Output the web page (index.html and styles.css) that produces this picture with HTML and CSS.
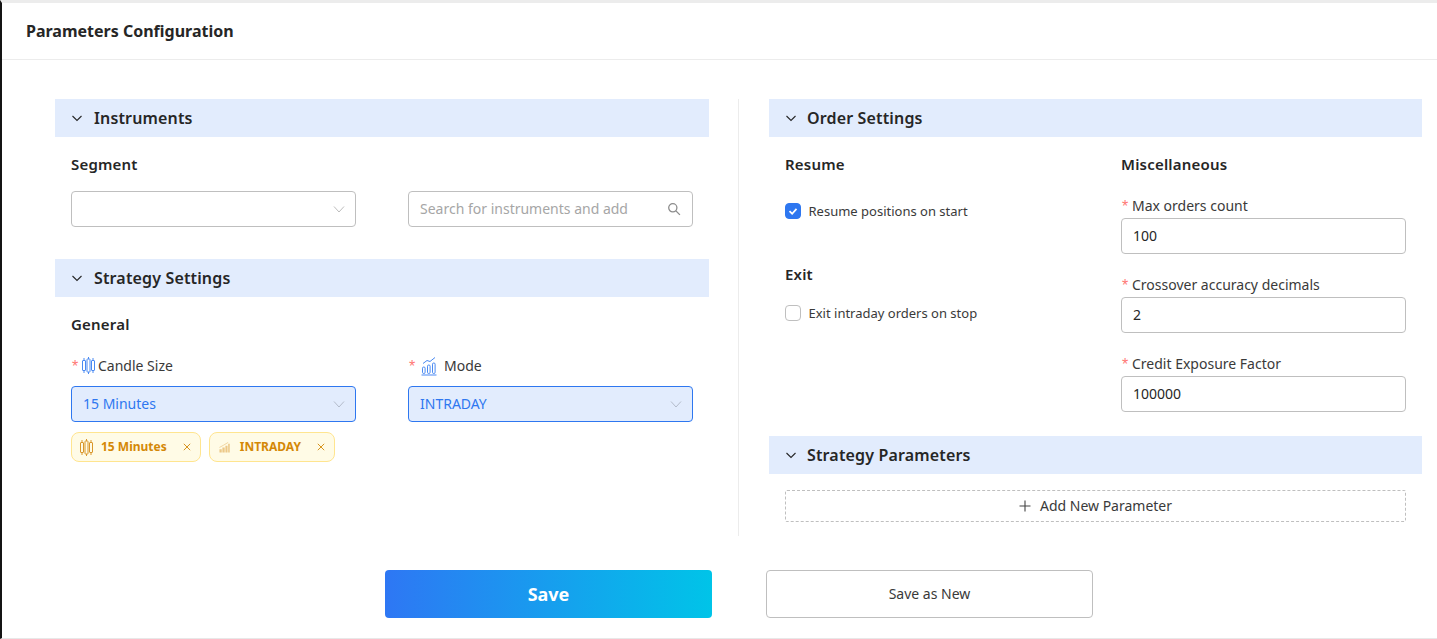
FILE: index.html
```html
<!DOCTYPE html>
<html lang="en">
<head>
<meta charset="utf-8">
<title>Parameters Configuration</title>
<link rel="stylesheet" href="styles.css">
</head>
<body>
<div class="page">
  <header class="page-header">Parameters Configuration</header>
  <main class="content">
    <div class="columns">
      <section class="col col-left">
        <div class="panel-head"><svg class="caret" viewBox="0 0 12 12"><path d="M1.5 4 6 8.5 10.5 4"/></svg><span>Instruments</span></div>
        <div class="panel-body">
          <h4 class="sub segment-title">Segment</h4>
          <div class="two">
            <div class="select"><span></span><svg class="arrow" viewBox="0 0 12 12"><path d="M1 3.5 6 9l5-5.5"/></svg></div>
            <div class="select search"><span class="placeholder">Search for instruments and add</span>
              <svg class="search-icon" viewBox="0 0 14 14"><circle cx="5.8" cy="5.8" r="4.1"/><path d="m8.9 8.9 4 4"/></svg></div>
          </div>
        </div>
        <div class="panel-head strategy-head"><svg class="caret" viewBox="0 0 12 12"><path d="M1.5 4 6 8.5 10.5 4"/></svg><span>Strategy Settings</span></div>
        <div class="panel-body">
          <h4 class="sub general-title">General</h4>
          <div class="two">
            <div class="field">
              <label class="lbl"><i class="req">*</i>
                <svg class="ico-candle" viewBox="0 0 13 17"><g class="blue-stroke"><path d="M2 1v2.500M2 13.500V16M6.500 0v2M6.500 15v2M11 1v2.500M11 13.500V16"/><rect x=".5" y="3.500" width="3" height="10" rx=".5"/><rect x="5" y="2" width="3" height="13" rx=".5"/><rect x="9.500" y="3.500" width="3" height="10" rx=".5"/></g></svg>
                Candle Size</label>
              <div class="select active"><span>15 Minutes</span><svg class="arrow" viewBox="0 0 12 12"><path d="M1 3.5 6 9l5-5.5"/></svg></div>
            </div>
            <div class="field">
              <label class="lbl mode-lbl"><i class="req">*</i>
                <svg class="ico-mode" viewBox="0 0 16 20"><g class="blue-stroke"><rect x="1.5" y="11" width="2.6" height="6.5" rx="1.2"/><rect x="6.5" y="9" width="2.6" height="8.5" rx="1.2"/><rect x="11.5" y="7" width="2.6" height="10.5" rx="1.2"/><path d="M2 7.5 6 4.5 9 5.5 14 1.5"/><path class="base" d="M.5 19h15"/></g></svg>
                Mode</label>
              <div class="select active"><span>INTRADAY</span><svg class="arrow" viewBox="0 0 12 12"><path d="M1 3.5 6 9l5-5.5"/></svg></div>
            </div>
          </div>
          <div class="tags">
            <span class="tag tag-candle">
              <svg class="tag-ico" viewBox="0 0 13 17"><g class="amber-stroke"><path d="M2 1v2.500M2 13.500V16M6.500 0v2M6.500 15v2M11 1v2.500M11 13.500V16"/><rect x=".5" y="3.500" width="3" height="10" rx=".5"/><rect x="5" y="2" width="3" height="13" rx=".5"/><rect x="9.500" y="3.500" width="3" height="10" rx=".5"/></g></svg>
              <b>15 Minutes</b><svg class="x" viewBox="0 0 8 8"><path d="m.8.8 6.4 6.4M7.2.8.8 7.2"/></svg></span>
            <span class="tag tag-mode">
              <svg class="tag-ico2" viewBox="0 0 12 12"><path class="soft" d="M.5 12V8.5h2.5V12zM3.7 12V6.5h2.5V12zM7 12V4.5h2.3V12zM10 12V2.5h1.7V12z"/><path class="soft-line" d="M.5 6.5 5 4l5-3"/></svg>
              <b>INTRADAY</b><svg class="x" viewBox="0 0 8 8"><path d="m.8.8 6.4 6.4M7.2.8.8 7.2"/></svg></span>
          </div>
        </div>
      </section>
      <section class="col col-right">
        <div class="panel-head"><svg class="caret" viewBox="0 0 12 12"><path d="M1.5 4 6 8.5 10.5 4"/></svg><span>Order Settings</span></div>
        <div class="panel-body order-body">
          <div class="two order">
            <div>
              <h4 class="sub segment-title">Resume</h4>
              <label class="check-row resume-row"><span class="check on"><svg viewBox="0 0 16 16"><path d="m4 8.2 3 2.9 5-5.6"/></svg></span>Resume positions on start</label>
              <h4 class="sub exit-title">Exit</h4>
              <label class="check-row exit-row"><span class="check"></span>Exit intraday orders on stop</label>
            </div>
            <div>
              <h4 class="sub misc-title">Miscellaneous</h4>
              <div class="input-field"><label class="lbl small"><i class="req">*</i>Max orders count</label><div class="input">100</div></div>
              <div class="input-field"><label class="lbl small"><i class="req">*</i>Crossover accuracy decimals</label><div class="input">2</div></div>
              <div class="input-field"><label class="lbl small"><i class="req">*</i>Credit Exposure Factor</label><div class="input">100000</div></div>
            </div>
          </div>
        </div>
        <div class="panel-head params-head"><svg class="caret" viewBox="0 0 12 12"><path d="M1.5 4 6 8.5 10.5 4"/></svg><span>Strategy Parameters</span></div>
        <div class="panel-body params-body">
          <button class="add-btn"><svg viewBox="0 0 12 12"><path d="M6 .5v11M.5 6h11"/></svg>Add New Parameter</button>
        </div>
      </section>
    </div>
    <div class="actions">
      <button class="btn-save">Save</button>
      <button class="btn-new">Save as New</button>
    </div>
  </main>
</div>
</body>
</html>
```
FILE: styles.css
```css
* { box-sizing: border-box; }
html, body { margin: 0; height: 100%; }
body { font-family: "Noto Sans", "Open Sans", sans-serif; color: #262626; background: #fff; overflow: hidden; }
.page { height: 639px; border-top: 3px solid #ececec; border-left: 2px solid #141414; border-bottom: 1px solid #e8e8e8; display: flex; flex-direction: column; }
.page-header { height: 57px; flex: none; padding-left: 24px; display: flex; align-items: center; font-size: 16px; font-weight: 700; color: #262626; border-bottom: 1px solid #ececec; padding-bottom: 1px; }
.content { padding: 39px 15px 0 53px; }
.columns { display: grid; grid-template-columns: 654px 653px; column-gap: 60px; position: relative; height: 437px; }
.columns::before { content: ""; position: absolute; left: 683px; top: 0; bottom: 0; width: 1px; background: #ececec; }
.panel-head { height: 38px; background: #e2ecfd; display: flex; align-items: center; padding-left: 16px; font-size: 16px; font-weight: 600; letter-spacing: .15px; color: #262626; }
.caret { width: 12px; height: 12px; margin-right: 10px; fill: none; stroke: #262626; stroke-width: 1.1; }
.col-left .caret { margin-right: 11px; }
.panel-body { padding: 0 16px; }
.sub { margin: 0; font-size: 15px; line-height: 20px; font-weight: 600; color: #262626; letter-spacing: .2px; }
.segment-title { padding-top: 17px; }
.general-title { padding-top: 17px; }
.two { display: grid; grid-template-columns: 285px 285px; column-gap: 52px; }
.select { height: 36px; border: 1px solid #bfbfbf; border-radius: 4px; display: flex; align-items: center; justify-content: space-between; padding: 0 10px 2px 11px; font-size: 14px; background: #fff; }
.panel-body > .sub + .two { margin-top: 17px; }
.arrow { width: 12px; height: 12px; fill: none; stroke: #bdbdbd; stroke-width: 1; flex: none; margin-top: 2px; }
.placeholder { color: #a6a6a6; font-size: 14px; }
.search-icon { width: 14px; height: 14px; fill: none; stroke: #8c8c8c; stroke-width: 1.3; margin-right: 1px; margin-top: 2px; }
.strategy-head { margin-top: 32px; }
.field { display: flex; flex-direction: column; }
.lbl { height: 20px; display: flex; align-items: center; font-size: 14px; color: #3a3a3a; margin-bottom: 10px; position: relative; top: -1px; }
.req { font-style: normal; color: #ff7875; font-size: 16px; width: 9px; margin-left: 1px; flex: none; font-family: "Liberation Sans", sans-serif; padding-top: 3px; }
.general-title + .two { margin-top: 22px !important; }
.ico-candle { width: 13px; height: 17px; margin: 0 3px 0 1px; }
.ico-mode { width: 16px; height: 20px; margin: 2px 7px 0 3px; }
.blue-stroke { fill: none; stroke: #4a8af2; stroke-width: 1; }
.blue-stroke .base { stroke: #7fabf6; stroke-width: 1.4; }
.amber-stroke { fill: none; stroke: #d9962a; stroke-width: 1; }
.select.active { border-color: #2e77f0; background: #e2ecfd; color: #2e77f0; }
.select.active .arrow { stroke: #b4bccb; }
.tags { display: flex; gap: 8px; margin-top: 10px; }
.tag { height: 30px; border: 1px solid #ffe58f; background: #fffbe6; border-radius: 8px; display: flex; align-items: center; color: #d48806; font-size: 12px; padding: 0 9px 0 8px; }
.tag b { font-weight: 700; margin-bottom: 2px; }
.tag-ico { width: 13px; height: 17px; margin-right: 8px; }
.tag-ico2 { width: 11px; height: 12px; margin-right: 10px; margin-left: 1px; }
.soft { fill: #ecc888; }
.soft-line { fill: none; stroke: #ecc888; stroke-width: .8; }
.x { width: 8px; height: 8px; margin-left: 16px; fill: none; stroke: #d48806; stroke-width: .9; }
.order-body .two.order { grid-template-columns: 284px 285px; }
.check-row { display: flex; align-items: center; font-size: 13px; color: #3a3a3a; height: 20px; }
.check { width: 16px; height: 16px; border: 1px solid #bfbfbf; border-radius: 4px; margin-right: 7.5px; display: flex; flex: none; background: #fff; }
.check.on { background: #2e77f0; border-color: #2e77f0; }
.check svg { width: 14px; height: 14px; fill: none; stroke: #fff; stroke-width: 2; }
.resume-row { margin-top: 27px; }
.exit-title { margin-top: 43px; }
.exit-row { margin-top: 19px; }
.misc-title { padding-top: 17px; }
.input-field { margin-bottom: 21px; }
.misc-title + .input-field { margin-top: 22px; }
.lbl.small { margin-bottom: 2px; }
.input-field .lbl.small .req { width: 10px; }
.input { height: 36px; border: 1px solid #bfbfbf; border-radius: 4px; padding: 0 11px 2px; display: flex; align-items: center; font-size: 14px; color: #262626; }
.order-body { height: 299px; }
.params-body { padding-top: 16px; }
.add-btn { width: 621px; height: 32px; background: #fff; border: 1px dashed #bfbfbf; border-radius: 2px; font: 14px "Noto Sans", sans-serif; color: #3a3a3a; display: flex; align-items: center; justify-content: center; padding: 0 0 2px; }
.add-btn svg { width: 12px; height: 12px; margin: 2px 9px 0 0; fill: none; stroke: #444; stroke-width: 1.1; }
.actions { display: flex; gap: 54px; padding-left: 330px; margin-top: 34px; }
.btn-save { width: 327px; height: 48px; border: 0; border-radius: 4px; background: linear-gradient(90deg, #2e77f4, #00c4e8); color: #fff; font: 700 18px "Noto Sans", sans-serif; }
.btn-new { width: 327px; height: 48px; background: #fff; border: 1px solid #bfbfbf; border-radius: 4px; color: #3a3a3a; font: 14px "Noto Sans", sans-serif; padding-bottom: 3px; }
```
